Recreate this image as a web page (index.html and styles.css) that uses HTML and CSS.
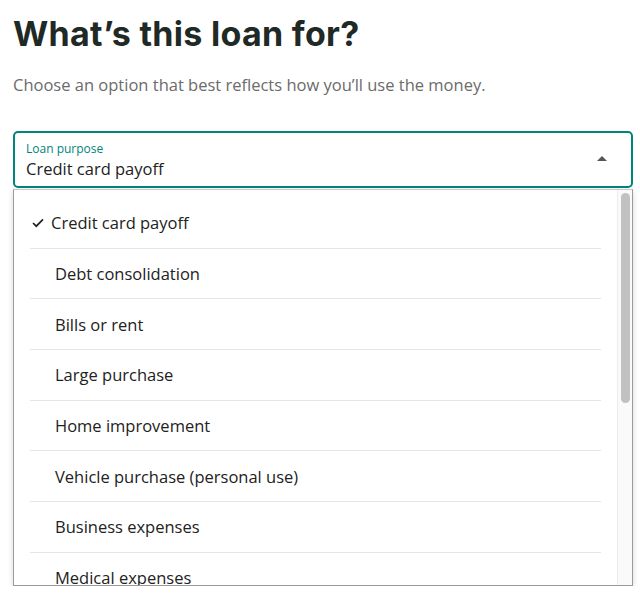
FILE: index.html
```html
<!DOCTYPE html>
<html lang="en">
<head>
    <meta charset="UTF-8">
    <meta name="viewport" content="width=device-width, initial-scale=1.0">
    <title>Loan purpose</title>
    <link rel="stylesheet" href="styles.css">
</head>
<body>

<div class="page">
    <h1 class="title">What’s this loan for?</h1>
    <p class="subtitle">Choose an option that best reflects how you’ll use the money.</p>

    <div class="select">
        <div class="select-field">
            <span class="select-label">Loan purpose</span>
            <span class="select-value">Credit card payoff</span>
        </div>
        <span class="select-caret"></span>
    </div>

    <div class="dropdown">
        <ul class="options">
            <li class="option selected">
                <svg class="check" width="12" height="10" viewBox="0 0 12 10"><path d="M1 5 L4.3 8.2 L11 1.4" fill="none" stroke="#222" stroke-width="1.7"/></svg>
                Credit card payoff
            </li>
            <li class="option">Debt consolidation</li>
            <li class="option">Bills or rent</li>
            <li class="option">Large purchase</li>
            <li class="option">Home improvement</li>
            <li class="option">Vehicle purchase (personal use)</li>
            <li class="option">Business expenses</li>
            <li class="option">Medical expenses</li>
        </ul>
        <div class="scrollbar"><div class="scrollbar-thumb"></div></div>
    </div>
</div>

</body>
</html>
```

FILE: styles.css
```css
body {
    margin: 0;
    padding: 0;
    background-color: #fff;
    font-family: "Open Sans", "Liberation Sans", sans-serif;
    color: #222;
}

.page {
    padding: 0 7px 0 13px;
}

.title {
    margin: 0;
    padding-top: 13px;
    font-family: Inter, "Liberation Sans", sans-serif;
    font-weight: 700;
    font-size: 34px;
    line-height: 42px;
    letter-spacing: 0.3px;
    color: #1f2926;
}

.subtitle {
    margin: 18px 0 0;
    font-size: 16.5px;
    line-height: 24px;
    color: #6b6b6b;
}

.select {
    margin-top: 34px;
    height: 57px;
    box-sizing: border-box;
    border: 2px solid #00857d;
    border-radius: 5px;
    display: flex;
    align-items: center;
    padding: 0 24px 0 11px;
}

.select-field {
    flex: 1;
    display: flex;
    flex-direction: column;
}

.select-label {
    font-size: 12px;
    line-height: 16px;
    color: #00857d;
}

.select-value {
    font-size: 16.5px;
    line-height: 24px;
    margin-bottom: -2px;
}

.select-caret {
    width: 0;
    height: 0;
    margin-top: -2px;
    border-left: 5px solid transparent;
    border-right: 5px solid transparent;
    border-bottom: 5px solid #555;
}

.dropdown {
    position: relative;
    margin-top: 1px;
    height: 397px;
    box-sizing: border-box;
    overflow: hidden;
    border: 1px solid #9a9a9a;
    border-top-color: #c8c8c8;
    box-shadow: 0 2px 6px rgba(0, 0, 0, 0.15);
    background-color: #fff;
}

.options {
    list-style: none;
    margin: 0 15px 0 0;
    padding: 8px 0 0;
}

.option {
    margin: 0 16px;
    height: 50.67px;
    box-sizing: border-box;
    display: flex;
    align-items: center;
    padding-left: 25px;
    border-bottom: 1px solid #e6e6e6;
    font-size: 16.5px;
}

.option.selected {
    padding-left: 2px;
}

.check {
    margin-right: 7px;
}

.scrollbar {
    position: absolute;
    top: 0;
    right: 0;
    bottom: 0;
    width: 15px;
    box-sizing: border-box;
    background-color: #fafafa;
    border-left: 1px solid #ececec;
}

.scrollbar-thumb {
    margin: 3px 2px 0 3px;
    height: 210px;
    border-radius: 5px;
    background-color: #c1c1c1;
}
```
